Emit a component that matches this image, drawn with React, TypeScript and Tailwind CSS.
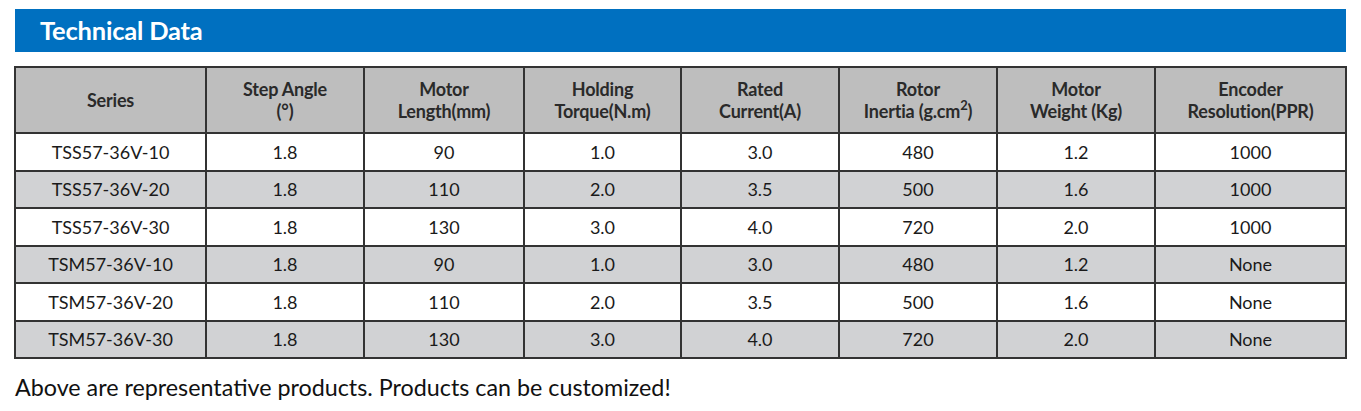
import React from "react";

const rows = [
  ["TSS57-36V-10", "1.8", "90", "1.0", "3.0", "480", "1.2", "1000"],
  ["TSS57-36V-20", "1.8", "110", "2.0", "3.5", "500", "1.6", "1000"],
  ["TSS57-36V-30", "1.8", "130", "3.0", "4.0", "720", "2.0", "1000"],
  ["TSM57-36V-10", "1.8", "90", "1.0", "3.0", "480", "1.2", "None"],
  ["TSM57-36V-20", "1.8", "110", "2.0", "3.5", "500", "1.6", "None"],
  ["TSM57-36V-30", "1.8", "130", "3.0", "4.0", "720", "2.0", "None"],
];

const widths = [191, 158, 160, 157, 158, 158, 158, 191];

const th = "border-2 border-[#333] font-bold text-[18px] leading-[22px] text-[#2a2a2a] tracking-[-0.2px]";

export default function App() {
  return (
    <div
      className="w-[1361px] h-[411px] bg-white text-[#1a1a1a] overflow-hidden"
      style={{ fontFamily: "Lato, 'Open Sans', sans-serif" }}
    >
      <div className="pt-[9px] pl-[15px]">
        <div className="w-[1331px] h-[43px] bg-[#0070c0] flex items-center pl-[25px]">
          <span className="text-white font-bold text-[25.5px] tracking-[-0.2px]">Technical Data</span>
        </div>
      </div>
      <div className="pl-[14px] pt-[14px]">
        <table className="border-collapse table-fixed w-[1331px]">
          <colgroup>
            {widths.map((w, i) => (
              <col key={i} style={{ width: w }} />
            ))}
          </colgroup>
          <thead>
            <tr className="h-[66px] bg-[#bebebe]">
              <th className={th}>Series</th>
              <th className={th}>Step Angle<br />(°)</th>
              <th className={th}>Motor<br />Length(mm)</th>
              <th className={th}>Holding<br />Torque(N.m)</th>
              <th className={th}>Rated<br />Current(A)</th>
              <th className={th}>Rotor<br />Inertia (g.cm<span className="inline-block align-top text-[13px] leading-none -mt-[1px]">2</span>)</th>
              <th className={th}>Motor<br />Weight (Kg)</th>
              <th className={th}>Encoder<br />Resolution(PPR)</th>
            </tr>
          </thead>
          <tbody>
            {rows.map((r, i) => (
              <tr key={i} className={i % 2 === 1 ? "h-[37.5px] bg-[#d1d2d4]" : "h-[37.5px] bg-white"}>
                {r.map((c, j) => (
                  <td key={j} className="border-2 border-[#333] text-center text-[18px] leading-none p-0">
                    {c}
                  </td>
                ))}
              </tr>
            ))}
          </tbody>
        </table>
      </div>
      <div className="pl-[15px] pt-[13px] text-[23.3px] leading-[30px] text-[#111]">
        Above are representative products. Products can be customized!
      </div>
    </div>
  );
}
